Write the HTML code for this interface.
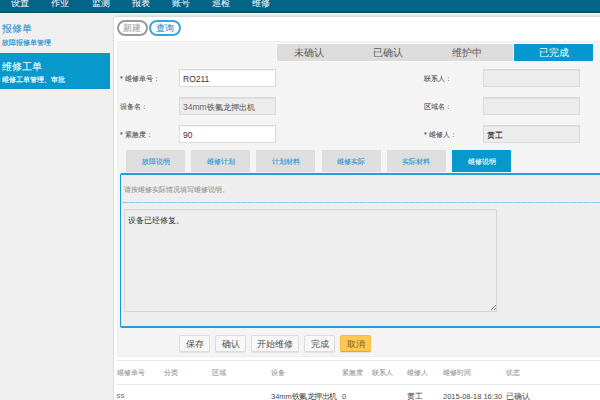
<!DOCTYPE html>
<html><head><meta charset="utf-8">
<style>
*{margin:0;padding:0;box-sizing:border-box}
html,body{width:600px;height:400px;overflow:hidden}
body{background:#efefef;font-family:"Liberation Sans",sans-serif;position:relative;color:#333}
.a{position:absolute;white-space:nowrap;-webkit-text-stroke-width:0.08px}
.lbl,.tab,.th,.td{-webkit-text-stroke-width:0.1px}
.sm{-webkit-text-stroke-width:0.14px}
.lt{-webkit-text-stroke-width:0}
.nav{left:0;top:0;width:600px;height:13px;background:linear-gradient(#036487 0,#036487 11.5px,#02587a 11.5px,#014b6a 13px)}
.navline{left:0;top:13px;width:600px;height:1px;background:#fbf8f6}
.ni{color:#e8f0f4;font-size:9px;line-height:10px;top:-2px}
.side1{left:2px;color:#1b8fd0;font-size:9.5px;line-height:12px}
.sideblk{left:0;top:53px;width:110px;height:36px;background:#0899cc}
.panel{left:113px;top:16px;width:500px;height:400px;background:#fff;border:1px solid #dcdcdc;border-radius:3px;box-shadow:0 -1px 0 #e6e6e6}
.pill{height:16px;border-radius:8px;font-size:8.5px;line-height:13px;text-align:center}
.inner{left:117px;top:41px;width:500px;height:315.5px;background:#f4f4f4;border:1px solid #eeeeee}
.stab{top:43.7px;height:17px;background:#dcdcdc;font-size:9.5px;line-height:17px;color:#5a5a5a;text-align:center;-webkit-text-stroke-width:0}
.lbl{font-size:7px;line-height:10px;color:#555}
.inp{width:97px;height:18px;border:1px solid #dadada;font-size:8.3px;line-height:17px;padding-left:3px;padding-top:1px;box-shadow:inset 0 1px 1px rgba(0,0,0,.05)}
.inp .lt{font-size:8.5px}
.tab{top:150px;height:22px;width:59px;background:#dedede;color:#2a98d4;font-size:7.2px;line-height:24px;text-align:center}
.box{left:120px;top:173px;width:500px;height:155px;border:2px solid #20a0d6;border-left:1.5px solid #169bd5;border-radius:2px 0 0 2px;background:#eeeeee}
.btn{top:335px;height:17px;border:1px solid #dcdcdc;border-radius:2px;background:#f7f7f7;font-size:8.6px;line-height:16.5px;text-align:center;color:#505050;-webkit-text-stroke-width:0;box-shadow:0 1px 1px rgba(0,0,0,.07)}
.th{top:367.5px;font-size:7px;line-height:10px;color:#9a9a9a}
.td{top:391.5px;font-size:7.5px;line-height:10px;color:#4a4a4a;-webkit-text-stroke-width:0!important}
</style></head><body>
<div class="a nav"></div>
<div class="a navline"></div>
<div class="a ni" style="left:10.5px">设置</div>
<div class="a ni" style="left:50.5px">作业</div>
<div class="a ni" style="left:91.5px">监测</div>
<div class="a ni" style="left:131.5px">报表</div>
<div class="a ni" style="left:172px">账号</div>
<div class="a ni" style="left:212px">巡检</div>
<div class="a ni" style="left:252px">维修</div>

<div class="a side1" style="top:23px">报修单</div>
<div class="a side1 sm" style="top:38px;font-size:7px;line-height:10px">故障报修单管理</div>
<div class="a sideblk"></div>
<div class="a side1" style="top:61px;color:#fff">维修工单</div>
<div class="a side1 sm" style="top:74.5px;font-size:7px;line-height:10px;color:#fff">维修工单管理、审批</div>

<div class="a panel"></div>
<div class="a pill" style="left:116.5px;top:20px;width:31px;border:2px solid #9a9a9a;color:#a0a0a0">新建</div>
<div class="a pill" style="left:149px;top:20px;width:31.5px;border:2px solid #3aa6da;color:#1f8fcc">查询</div>

<div class="a inner"></div>
<div class="a stab" style="left:277.3px;width:236.7px;background:#dcdcdc;box-shadow:0 0 0 1px #fbfbfb"></div>
<div class="a stab" style="left:294px;background:transparent">未确认</div>
<div class="a stab" style="left:373.4px;background:transparent">已确认</div>
<div class="a stab" style="left:452px;background:transparent">维护中</div>
<div class="a stab" style="left:514px;width:79px;background:#0597cf;color:#fff;box-shadow:0 0 0 1px #fbfbfb">已完成</div>

<div class="a lbl" style="left:120px;top:74px">* 维修单号：</div>
<div class="a inp" style="left:179px;top:69px;background:#fff;color:#333"><span class="lt">RO211</span></div>
<div class="a lbl" style="left:120px;top:102px">设备名：</div>
<div class="a inp" style="left:179px;top:97px;background:#ececec;color:#666"><span class="lt">34mm</span>铁氟龙押出机</div>
<div class="a lbl" style="left:120px;top:130px">* 紧急度：</div>
<div class="a inp" style="left:179px;top:125px;background:#fff;color:#333"><span class="lt">90</span></div>

<div class="a lbl" style="left:424px;top:74px">联系人：</div>
<div class="a inp" style="left:483px;top:69px;width:97px;background:#ececec"></div>
<div class="a lbl" style="left:424px;top:102px">区域名：</div>
<div class="a inp" style="left:483px;top:97px;width:97px;background:#ececec"></div>
<div class="a lbl" style="left:424px;top:130px">* 维修人：</div>
<div class="a inp" style="left:483px;top:125px;width:97px;background:#ececec;color:#222">黄工</div>

<div class="a tab" style="left:126px">故障说明</div>
<div class="a tab" style="left:191.2px">维修计划</div>
<div class="a tab" style="left:256.4px">计划材料</div>
<div class="a tab" style="left:321.6px">维修实际</div>
<div class="a tab" style="left:386.8px">实际材料</div>
<div class="a tab" style="left:452px;background:#0899cc;color:#fff">维修说明</div>

<div class="a box"></div>
<div class="a lbl" style="left:124px;top:185px;color:#999">请按维修实际情况填写维修说明。</div>
<div class="a" style="left:121.5px;top:202px;width:480px;height:1.2px;background:repeating-linear-gradient(90deg,#8fcbe4 0 6px,#b3dbec 6px 7px)"></div>
<div class="a" style="left:124px;top:209px;width:373px;height:102.5px;border:1px solid #d6d6d6;background:#eeeeee;box-shadow:inset 0 1px 1px rgba(0,0,0,.04)"></div>
<svg class="a" style="left:489px;top:303px" width="8" height="8"><path d="M7 2 L2 7 M7 5 L5 7" stroke="#777" stroke-width="1"/></svg>
<div class="a" style="left:127.5px;top:214.5px;font-size:8px;line-height:11px;color:#3a3a3a;-webkit-text-stroke-width:0.03px">设备已经修复。</div>

<div class="a btn" style="left:179px;width:31px">保存</div>
<div class="a btn" style="left:215px;width:31px">确认</div>
<div class="a btn" style="left:251px;width:48px">开始维修</div>
<div class="a btn" style="left:304px;width:31px">完成</div>
<div class="a btn" style="left:340px;width:31px;background:#ffc84e;border-color:#f5bd45;border-bottom-color:#e8a52a;color:#8a5a20">取消</div>

<div class="a" style="left:114px;top:357px;width:500px;height:50px;background:#fff"></div>
<div class="a" style="left:117px;top:360px;width:490px;height:0;height:1px;background:repeating-linear-gradient(90deg,#e6e6e6 0 7px,#f4f4f4 7px 8px)"></div>
<div class="a" style="left:117px;top:384px;width:490px;height:1px;background:#e6e6e6"></div>
<div class="a th" style="left:117px">维修单号</div>
<div class="a th" style="left:164px">分类</div>
<div class="a th" style="left:212px">区域</div>
<div class="a th" style="left:271px">设备</div>
<div class="a th" style="left:342px">紧急度</div>
<div class="a th" style="left:372px">联系人</div>
<div class="a th" style="left:407px">维修人</div>
<div class="a th" style="left:443px">维修时间</div>
<div class="a th" style="left:506px">状态</div>
<div class="a td lt" style="left:116.5px;font-size:8px;color:#707070;top:390.5px">ss</div>
<div class="a td" style="left:271px"><span class="lt">34mm</span><span style="letter-spacing:-0.5px">铁氟龙押出机</span></div>
<div class="a td lt" style="left:342px">0</div>
<div class="a td" style="left:407px">黄工</div>
<div class="a td lt" style="left:443px">2015-08-18 16:30</div>
<div class="a td" style="left:506px">已确认</div>
</body></html>
